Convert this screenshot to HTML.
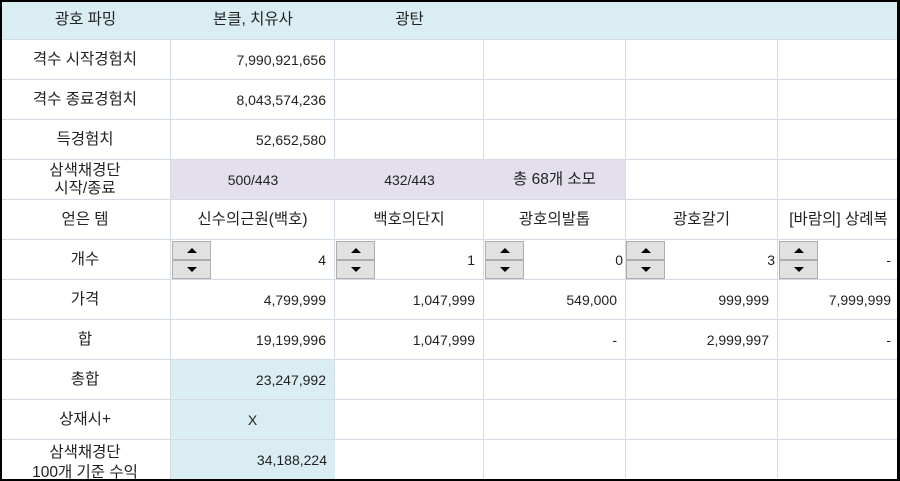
<!DOCTYPE html>
<html><head><meta charset="utf-8"><style>
*{margin:0;padding:0;box-sizing:border-box}
body{width:900px;height:481px;overflow:hidden;background:#fff;position:relative;font-family:"Liberation Sans","Noto Sans CJK KR",sans-serif;font-size:14px;color:#222}
.c{position:absolute;height:40px;border-right:1px solid #d5dbe5;border-bottom:1px solid #d5dbe5;display:flex;align-items:center;justify-content:center;text-align:center;line-height:18px;overflow:hidden}
.k{font-size:15.5px}
.r{justify-content:flex-end;padding-right:8px}
.h{background:#daedf3;border-right:none}
.p{background:#e4dfec}
.b{background:#daedf3}
.sp{position:absolute;width:39px;height:39px}
.sp div{height:19px;background:#e1e1e1;border:1px solid #adadad;display:flex;align-items:center;justify-content:center}
.up{width:0;height:0;border-left:5px solid transparent;border-right:5px solid transparent;border-bottom:5px solid #000}
.dn{width:0;height:0;border-left:5px solid transparent;border-right:5px solid transparent;border-top:5px solid #000}
#frame{position:absolute;left:0;top:0;width:900px;height:481px;border-left:2px solid #000;border-top:2px solid #000;border-right:3px solid #000;border-bottom:2px solid #000;pointer-events:none}
</style></head><body>
<div class="c h k" style="left:0;top:0;width:171px">광호 파밍</div>
<div class="c h k" style="top:0;width:164px;left:171px">본클, 치유사</div>
<div class="c h k" style="left:335px;top:0;width:149px">광탄</div>
<div class="c h" style="left:484px;top:0;width:416px"></div>

<div class="c k" style="left:0;top:40px;width:171px">격수 시작경험치</div>
<div class="c r" style="left:171px;top:40px;width:164px">7,990,921,656</div>
<div class="c" style="left:335px;top:40px;width:149px"></div>
<div class="c" style="left:484px;top:40px;width:142px"></div>
<div class="c" style="left:626px;top:40px;width:152px"></div>
<div class="c" style="left:778px;top:40px;width:122px"></div>

<div class="c k" style="left:0;top:80px;width:171px">격수 종료경험치</div>
<div class="c r" style="left:171px;top:80px;width:164px">8,043,574,236</div>
<div class="c" style="left:335px;top:80px;width:149px"></div>
<div class="c" style="left:484px;top:80px;width:142px"></div>
<div class="c" style="left:626px;top:80px;width:152px"></div>
<div class="c" style="left:778px;top:80px;width:122px"></div>

<div class="c k" style="left:0;top:120px;width:171px">득경험치</div>
<div class="c r" style="left:171px;top:120px;width:164px">52,652,580</div>
<div class="c" style="left:335px;top:120px;width:149px"></div>
<div class="c" style="left:484px;top:120px;width:142px"></div>
<div class="c" style="left:626px;top:120px;width:152px"></div>
<div class="c" style="left:778px;top:120px;width:122px"></div>

<div class="c k" style="left:0;top:160px;width:171px">삼색채경단<br>시작/종료</div>
<div class="c p" style="left:171px;top:160px;width:164px;border-right:none">500/443</div>
<div class="c p" style="left:335px;top:160px;width:149px;border-right:none">432/443</div>
<div class="c p k" style="left:484px;top:160px;width:142px">총 68개 소모</div>
<div class="c" style="left:626px;top:160px;width:152px"></div>
<div class="c" style="left:778px;top:160px;width:122px"></div>

<div class="c k" style="left:0;top:200px;width:171px">얻은 템</div>
<div class="c k" style="left:171px;top:200px;width:164px">신수의근원(백호)</div>
<div class="c k" style="left:335px;top:200px;width:149px">백호의단지</div>
<div class="c k" style="left:484px;top:200px;width:142px">광호의발톱</div>
<div class="c k" style="left:626px;top:200px;width:152px">광호갈기</div>
<div class="c k" style="left:778px;top:200px;width:122px;white-space:nowrap">[바람의] 상례복</div>

<div class="c k" style="left:0;top:240px;width:171px">개수</div>
<div class="c r" style="left:171px;top:240px;width:164px">4</div>
<div class="c r" style="left:335px;top:240px;width:149px">1</div>
<div class="c r" style="left:484px;top:240px;width:142px;padding-right:2px">0</div>
<div class="c r" style="left:626px;top:240px;width:152px;padding-right:2px">3</div>
<div class="c r" style="left:778px;top:240px;width:122px">-</div>
<div class="sp" style="left:172px;top:241px"><div><span class="up"></span></div><div><span class="dn"></span></div></div>
<div class="sp" style="left:336px;top:241px"><div><span class="up"></span></div><div><span class="dn"></span></div></div>
<div class="sp" style="left:485px;top:241px"><div><span class="up"></span></div><div><span class="dn"></span></div></div>
<div class="sp" style="left:626px;top:241px"><div><span class="up"></span></div><div><span class="dn"></span></div></div>
<div class="sp" style="left:779px;top:241px"><div><span class="up"></span></div><div><span class="dn"></span></div></div>

<div class="c k" style="left:0;top:280px;width:171px">가격</div>
<div class="c r" style="left:171px;top:280px;width:164px">4,799,999</div>
<div class="c r" style="left:335px;top:280px;width:149px">1,047,999</div>
<div class="c r" style="left:484px;top:280px;width:142px">549,000</div>
<div class="c r" style="left:626px;top:280px;width:152px">999,999</div>
<div class="c r" style="left:778px;top:280px;width:122px">7,999,999</div>

<div class="c k" style="left:0;top:320px;width:171px">합</div>
<div class="c r" style="left:171px;top:320px;width:164px">19,199,996</div>
<div class="c r" style="left:335px;top:320px;width:149px">1,047,999</div>
<div class="c r" style="left:484px;top:320px;width:142px">-</div>
<div class="c r" style="left:626px;top:320px;width:152px">2,999,997</div>
<div class="c r" style="left:778px;top:320px;width:122px">-</div>

<div class="c k" style="left:0;top:360px;width:171px">총합</div>
<div class="c r b" style="left:171px;top:360px;width:164px">23,247,992</div>
<div class="c" style="left:335px;top:360px;width:149px"></div>
<div class="c" style="left:484px;top:360px;width:142px"></div>
<div class="c" style="left:626px;top:360px;width:152px"></div>
<div class="c" style="left:778px;top:360px;width:122px"></div>

<div class="c k" style="left:0;top:400px;width:171px">상재시+</div>
<div class="c b" style="left:171px;top:400px;width:164px">X</div>
<div class="c" style="left:335px;top:400px;width:149px"></div>
<div class="c" style="left:484px;top:400px;width:142px"></div>
<div class="c" style="left:626px;top:400px;width:152px"></div>
<div class="c" style="left:778px;top:400px;width:122px"></div>

<div class="c k" style="left:0;top:440px;width:171px;align-items:flex-start;padding-top:3px;line-height:20px">삼색채경단<br>100개 기준 수익</div>
<div class="c r b" style="left:171px;top:440px;width:164px;border-right:none">34,188,224</div>
<div class="c" style="left:335px;top:440px;width:149px"></div>
<div class="c" style="left:484px;top:440px;width:142px"></div>
<div class="c" style="left:626px;top:440px;width:152px"></div>
<div class="c" style="left:778px;top:440px;width:122px"></div>

<div id="frame"></div>
</body></html>
